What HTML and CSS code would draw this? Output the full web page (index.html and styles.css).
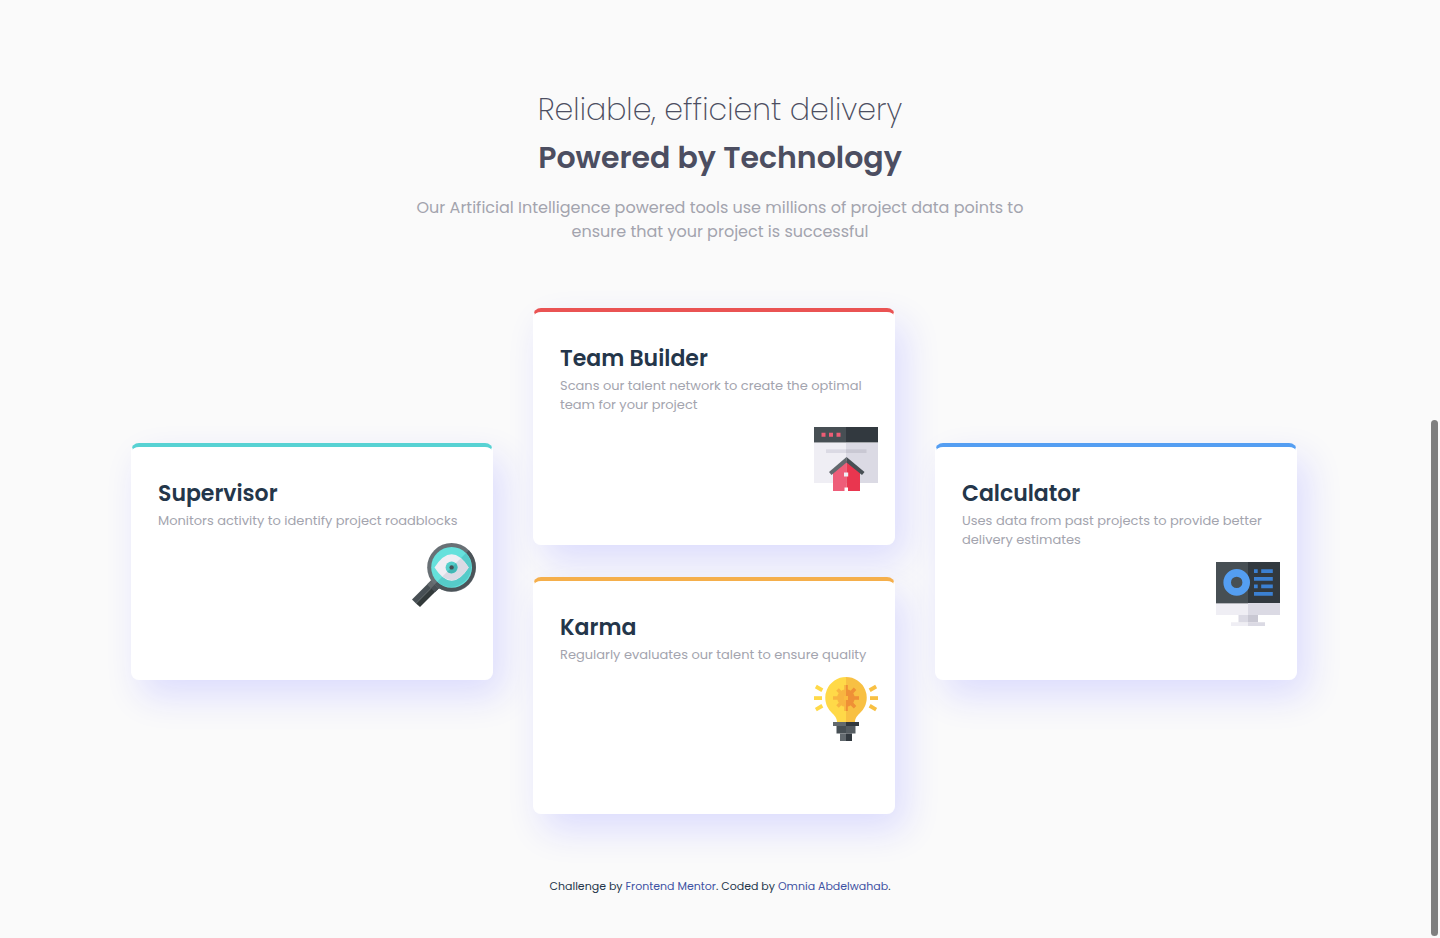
FILE: index.html
```
<!DOCTYPE html>
<html lang="en">
<head>
<meta charset="utf-8">
<meta name="viewport" content="width=device-width, initial-scale=1">
<title>Four card feature section</title>
<link rel="stylesheet" href="styles.css">
</head>
<body>
<header class="intro">
  <h1 class="title"><span class="title-light">Reliable, efficient delivery</span><span class="title-bold">Powered by Technology</span></h1>
  <p class="lead">Our Artificial Intelligence powered tools use millions of project data points to ensure that your project is successful</p>
</header>
<main class="cards">
  <article class="card card-cyan">
    <h2 class="card-title">Supervisor</h2>
    <p class="card-text">Monitors activity to identify project roadblocks</p>
    <svg class="card-icon" viewBox="0 0 64 64" aria-hidden="true">
      <path fill="#474f54" d="M0 56.5 19 37.5 23 41.5 4 60.5Z"/>
      <path fill="#32393a" d="M4 60.5 23 41.5 26.8 45.2 8 64Z"/>
      <path fill="#62686c" d="M15 41.5 21 35.500 25 39.500 19 45.500Z"/>
      <path fill="#474f54" d="M19 45.500 25 39.500 29 43.500 23 49.300Z"/>
      <circle cx="39.600" cy="24.400" r="24.400" fill="#687075"/>
      <path fill="#4c5459" d="M56.850 7.150A24.400 24.400 0 0 1 22.350 41.650Z"/>
      <circle cx="39.600" cy="24.400" r="20.400" fill="#65e1dc"/>
      <path fill="#56cbc9" d="M54 10A20.400 20.400 0 0 1 25.200 38.800Z"/>
      <path fill="#efeef4" d="M22.500 24.400Q39.600-2 56.700 24.400 39.600 51 22.500 24.400Z"/>
      <path fill="#dbdae4" d="M48.800 15.200Q53 18.600 56.700 24.400 44 44 30.400 33.600Z"/>
      <circle cx="39.600" cy="24.400" r="6" fill="#55cfcb"/>
      <path fill="#42b6b4" d="M43.840 20.160A6 6 0 0 1 35.360 28.640Z"/>
      <circle cx="39.600" cy="24.400" r="2.200" fill="#474f54"/>
    </svg>
  </article>
  <div class="stack">
    <article class="card card-red">
      <h2 class="card-title">Team Builder</h2>
      <p class="card-text">Scans our talent network to create the optimal team for your project</p>
      <svg class="card-icon" viewBox="0 0 64 64" aria-hidden="true">
        <path fill="#efeef4" d="M0 15h32v41H0z"/><path fill="#dbdae4" d="M32 15h32v41H32z"/>
        <path fill="#474f54" d="M0 0h32v15H0z"/><path fill="#32393f" d="M32 0h32v15H32z"/>
        <path fill="#a5a8ac" d="M0 15h64v1H0z"/>
        <path fill="#ee5d75" d="M7.500 5.700h4v4h-4zM15 5.700h4v4h-4zM22.500 5.700h4v4h-4z"/>
        <path fill="#dbdae4" d="M12 22.300h20v3.700H12z"/><path fill="#c9c8d3" d="M32 22.300h20.500v3.700H32z"/>
        <path fill="#ee5d79" d="M19 45 32.500 34V64H19z"/><path fill="#e9364f" d="M32.500 34 46 45v19H32.500z"/>
        <path fill="#62696e" d="M32.500 30v5.500L17.500 48 15 45z"/><path fill="#474f54" d="M32.500 30 50.500 45 48 48 32.500 35.500z"/>
        <path fill="#efeef4" d="M30 45.500h4.200v4H30z"/><path fill="#fff" d="M30.500 60.500H34V64h-3.500z"/>
      </svg>
    </article>
    <article class="card card-orange">
      <h2 class="card-title">Karma</h2>
      <p class="card-text">Regularly evaluates our talent to ensure quality</p>
      <svg class="card-icon" viewBox="0 0 64 64" aria-hidden="true">
        <path fill="#ffd948" d="M32 0a20.700 20.700 0 0 0-14.700 35.300C20.500 38.500 23 41 23 45h9z"/>
        <path fill="#f8c043" d="M32 0a20.700 20.700 0 0 1 14.700 35.300C43.500 38.500 41 41 41 45h-9z"/>
        <g fill="#f8b440"><circle cx="32" cy="21" r="8.800"/><path d="M30.200 8h3.600v26h-3.600zM19 19.200h26v3.600H19z"/><path d="M30.200 9h3.600v24h-3.600z" transform="rotate(45 32 21)"/><path d="M30.200 9h3.600v24h-3.600z" transform="rotate(-45 32 21)"/></g>
        <path fill="#ef9036" d="M32 8h1.800v4.500a8.800 8.800 0 0 1 2.900 1.200l3.100-3.100 2.500 2.500-3.100 3.100a8.800 8.800 0 0 1 1.200 3H45v3.600h-4.600a8.800 8.800 0 0 1-1.200 3l3.100 3.100-2.500 2.500-3.100-3.100a8.800 8.800 0 0 1-2.900 1.200V34H32z"/>
        <path fill="#fbbb3e" d="M30 19h4v4h-4z"/>
        <g fill="#ffd948"><path d="M0 19.200h8V23H0z"/><path d="M2.800 7.800 9.300 11.600 7.400 15 .9 11.200z"/><path d="M.9 30.900 7.400 27.100 9.300 30.500 2.800 34.300z"/></g>
        <g fill="#f8c043"><path d="M56 19.200h8V23h-8z"/><path d="M61.200 7.800 54.700 11.600 56.600 15 63.100 11.200z"/><path d="M63.100 30.900 56.600 27.100 54.700 30.500 61.200 34.300z"/></g>
        <path fill="#62696e" d="M19 45h13v4H19z"/><path fill="#32393f" d="M32 45h13v4H32z"/>
        <path fill="#474f54" d="M22.500 49H32v7.500h-9.500z"/><path fill="#555c61" d="M32 49h9.500v7.500H32z"/>
        <path fill="#62696e" d="M26 56.500h6V64h-6z"/><path fill="#32393f" d="M32 56.500h6V64h-6z"/>
      </svg>
    </article>
  </div>
  <article class="card card-blue">
    <h2 class="card-title">Calculator</h2>
    <p class="card-text">Uses data from past projects to provide better delivery estimates</p>
    <svg class="card-icon" viewBox="0 0 64 64" aria-hidden="true">
      <path fill="#474f54" d="M0 0h32v41H0z"/><path fill="#32393f" d="M32 0h32v41H32z"/>
      <path fill="#efeef4" d="M0 41h32v12H0zM15 60.200h17V64H15z"/><path fill="#dbdae4" d="M32 41h32v12H32zM22.500 53H32v7.200h-9.500zM32 60.200h17V64H32z"/>
      <path fill="#c9c8d3" d="M32 53h10v7.200H32z"/><path fill="#b5b6bc" d="M0 41h32v1H0z"/>
      <circle cx="20.700" cy="20.400" r="9.500" fill="none" stroke="#549ef2" stroke-width="7.600"/>
      <path fill="#3b80d3" d="M38 7.200h3.700V11H38zM45.200 7.200h11.600V11H45.200zM38 15h18.800v3.800H38zM38 22.500h3.700v3.800H38zM45.200 22.500h11.600v3.800H45.200zM38 30h18.800v3.800H38z"/>
    </svg>
  </article>
</main>
<footer class="attribution">Challenge by <a href="#">Frontend Mentor</a>. Coded by <a href="#">Omnia Abdelwahab</a>.</footer>
<div class="scroll-thumb"></div>
</body>
</html>
```
FILE: styles.css
```
* { box-sizing: border-box; }
body {
  margin: 0;
  padding: 86px 0 40px;
  background: #fafafa;
  color: #24364a;
  font-family: Poppins, Inter, sans-serif;
}
h1, h2, p { margin: 0; }
.intro { text-align: center; color: #4c4e61; padding: 0 24px; }
.title { font-size: 30px; line-height: 48px; }
.title span { display: block; }
.title-light { font-family: "Poppins ExtraLight", Poppins, Inter, sans-serif; font-weight: 200; }
.title-bold { font-weight: 600; }
.lead {
  max-width: 640px;
  margin: 14px auto 0;
  color: #a3a4ae;
  font-size: 16px;
  line-height: 24px;
}
.cards {
  display: flex;
  justify-content: center;
  align-items: center;
  gap: 40px;
  margin-top: 64px;
  padding: 0 36px 0 24px;
}
.stack { display: grid; gap: 32px; flex: 0 1 362px; }
.card {
  display: flex;
  flex-direction: column;
  flex: 0 1 362px;
  min-height: 237px;
  padding: 30px 16px 28px 26px;
  border: solid #fff;
  border-width: 4px 1px 0;
  border-radius: 8px;
  background: #fff;
  box-shadow: 10px 16px 36px #dcdcfe;
}
.card-cyan { border-top-color: #57d2d3; }
.card-red { border-top-color: #ea5353; }
.card-orange { border-top-color: #f5af4b; }
.card-blue { border-top-color: #549ef2; }
.card-title { font-size: 22px; line-height: 34px; font-weight: 600; }
.card-text { color: #a3a4ae; font-size: 13px; line-height: 19px; }
.card-icon { width: 64px; height: 64px; margin-top: 13px; align-self: flex-end; }
.attribution { margin-top: 64px; text-align: center; font-size: 11px; line-height: 17px; }
.attribution a { color: #3e52a3; text-decoration: none; }
.scroll-thumb {
  position: fixed;
  right: 2px;
  bottom: 2px;
  width: 7px;
  height: 55%;
  border-radius: 4px;
  background: #7f7f7f;
}
@media (max-width: 900px) {
  .cards { flex-direction: column; gap: 32px; }
  .card, .stack { width: 100%; max-width: 362px; flex: none; }
}
```
